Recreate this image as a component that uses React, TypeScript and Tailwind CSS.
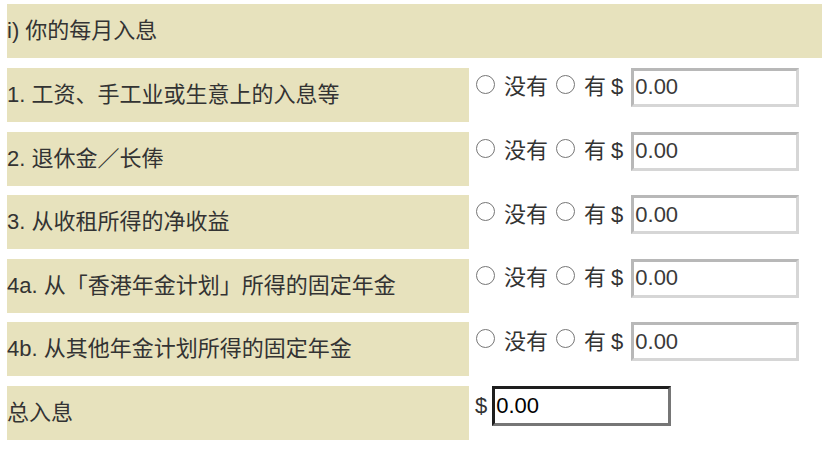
import React from "react";

const rows = [
  "1. 工资、手工业或生意上的入息等",
  "2. 退休金／长俸",
  "3. 从收租所得的净收益",
  "4a. 从「香港年金计划」所得的固定年金",
  "4b. 从其他年金计划所得的固定年金",
];

function Radio({ ml }: { ml: string }) {
  return (
    <span
      className={`${ml} mt-[7px] w-[19px] h-[19px] shrink-0 rounded-full border-[1.4px] border-[#767676] bg-white`}
    />
  );
}

export default function App() {
  return (
    <div
      className="pt-[4.4px] pl-[7px] flex flex-col gap-[9.6px] text-[22px] text-[#333] bg-white min-h-[450px]"
      style={{ fontFamily: '"Liberation Sans", "Noto Sans CJK SC", sans-serif' }}
    >
      <div className="h-[54px] bg-[#e7e2bd] flex items-center leading-none">
        i) 你的每月入息
      </div>
      {rows.map((r) => (
        <div key={r} className="h-[54px] flex">
          <div className="w-[462px] shrink-0 h-full bg-[#e7e2bd] flex items-center leading-none">
            {r}
          </div>
          <div className="flex items-start h-[39px] leading-none">
            <Radio ml="ml-[7px]" />
            <span className="ml-[9px] self-center">没有</span>
            <Radio ml="ml-[8px]" />
            <span className="ml-[9px] self-center">有</span>
            <span className="ml-[5px] self-center">$</span>
            <input
              readOnly
              value="0.00"
              className="ml-[8px] w-[168px] h-[39px] border-[3px] border-t-[#b8b8b8] border-l-[#b8b8b8] border-b-[#d6d6d6] border-r-[#d6d6d6] bg-white px-[1px] text-[22px] text-[#3a3a3a] outline-none"
              style={{ fontFamily: '"Liberation Sans", sans-serif' }}
            />
          </div>
        </div>
      ))}
      <div className="h-[54px] flex">
        <div className="w-[462px] shrink-0 h-full bg-[#e7e2bd] flex items-center leading-none">
          总入息
        </div>
        <div className="flex items-start h-[40px] leading-none">
          <span className="ml-[6px] self-center">$</span>
          <input
            readOnly
            value="0.00"
            className="ml-[5px] w-[179px] h-[40px] border-[3px] border-t-[#1e1e1e] border-l-[#1e1e1e] border-b-[#767676] border-r-[#767676] bg-white px-[1px] text-[22px] text-black outline-none"
            style={{ fontFamily: '"Liberation Sans", sans-serif' }}
          />
        </div>
      </div>
    </div>
  );
}
